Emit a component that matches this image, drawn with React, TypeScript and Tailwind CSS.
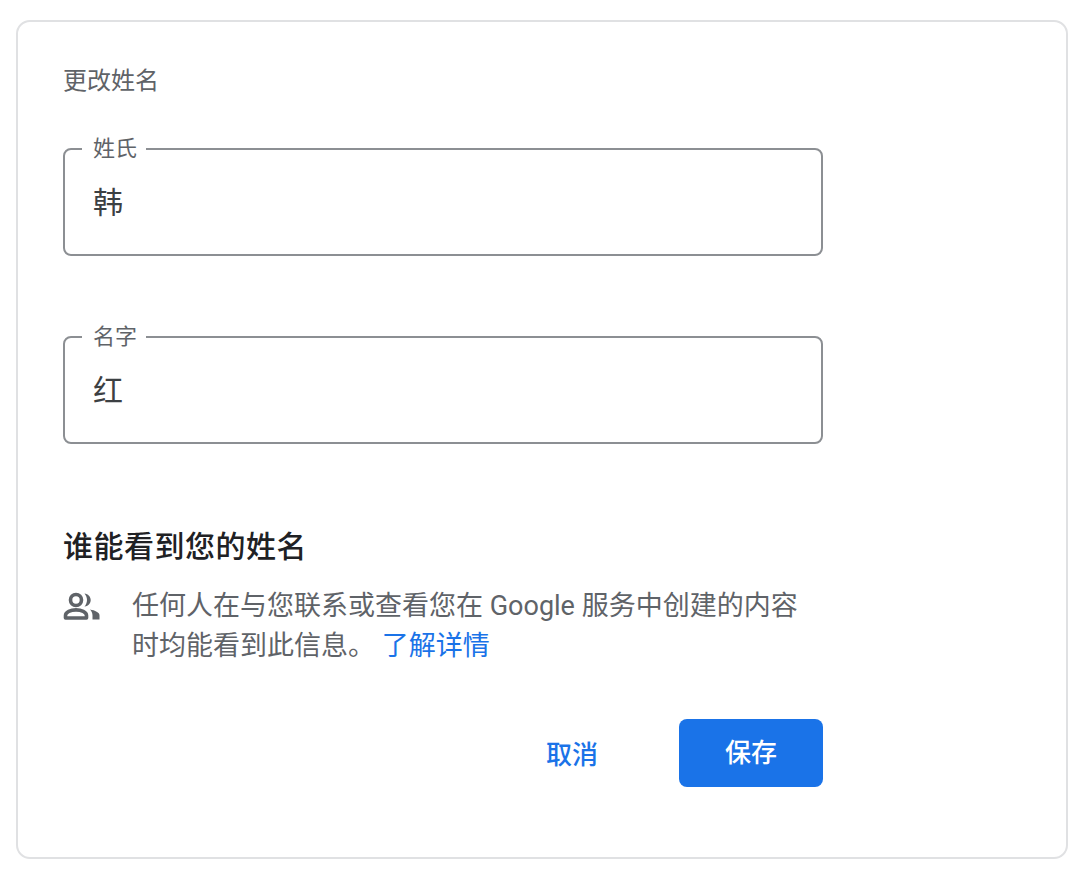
import React from "react";

const fontStack = "font-['Roboto','Noto_Sans_CJK_SC',sans-serif]";

function NameField({ label, value }: { label: string; value: string }) {
  return (
    <fieldset className="h-[120px] w-[760px] rounded-[8px] border-2 border-[#8c8f93] pl-[17px] pr-[16px]">
      <legend className="pl-[11px] pr-[9px] text-[22px] leading-[26px] text-[#5f6368]">{label}</legend>
      <div className="pl-[11px] pt-[21px] text-[30px] leading-[40px] text-[#3c4043]">{value}</div>
    </fieldset>
  );
}

function PeopleIcon() {
  return (
    <svg width="38" height="30" viewBox="0 0 38 30" fill="none" className="shrink-0">
      <circle cx="13" cy="8" r="5.5" stroke="#5f6368" strokeWidth="3.6" />
      <path d="M2.500 26v-2.500c0-3.600 5.200-5.600 10.500-5.600s10.500 2 10.500 5.600V26H2.500Z" stroke="#5f6368" strokeWidth="3.6" strokeLinejoin="round" />
      <path d="M21.500 1.500c3.500.4 6.200 3.200 6.200 6.600s-2.700 6.200-6.200 6.600c1.500-1.800 2.500-4.100 2.500-6.600s-1-4.800-2.500-6.600Z" fill="#5f6368" />
      <path d="M27 17.500c5 .9 9.500 2.800 9.500 6v4h-7v-4c0-2.400-1-4.400-2.500-6Z" fill="#5f6368" />
    </svg>
  );
}

export default function App() {
  return (
    <div className={`min-h-[877px] bg-white px-[16px] pb-[18px] pt-[20px] ${fontStack}`}>
      <div className="h-[839px] w-[1052px] rounded-[14px] border-2 border-[#e0e1e3] pl-[45px] pt-[43px]">
        <h1 className="text-[24px] font-normal leading-[32px] text-[#5f6368]">更改姓名</h1>

        <div className="mt-[39px] flex flex-col gap-[68px]">
          <NameField label="姓氏" value="韩" />
          <NameField label="名字" value="红" />
        </div>

        <h2 className="mt-[83px] text-[30px] font-medium leading-[40px] tracking-[0.5px] text-[#202124]">谁能看到您的姓名</h2>

        <div className="mt-[19px] flex w-[760px] items-start">
          <div className="w-[69px] pt-[6px]">
            <PeopleIcon />
          </div>
          <p className="w-[680px] text-[27px] leading-[40px] text-[#5f6368]">
            任何人在与您联系或查看您在 Google 服务中创建的内容
            <br />
            时均能看到此信息。 <span className="text-[#1a73e8]">了解详情</span>
          </p>
        </div>

        <div className="mt-[53px] flex w-[760px] items-center justify-end gap-[81px]">
          <button className="pt-[3px] text-[26px] font-medium leading-[36px] text-[#1a73e8]">取消</button>
          <button className="h-[68px] w-[144px] rounded-[8px] bg-[#1a73e8] pt-[1px] text-[26px] font-medium text-white">保存</button>
        </div>
      </div>
    </div>
  );
}
